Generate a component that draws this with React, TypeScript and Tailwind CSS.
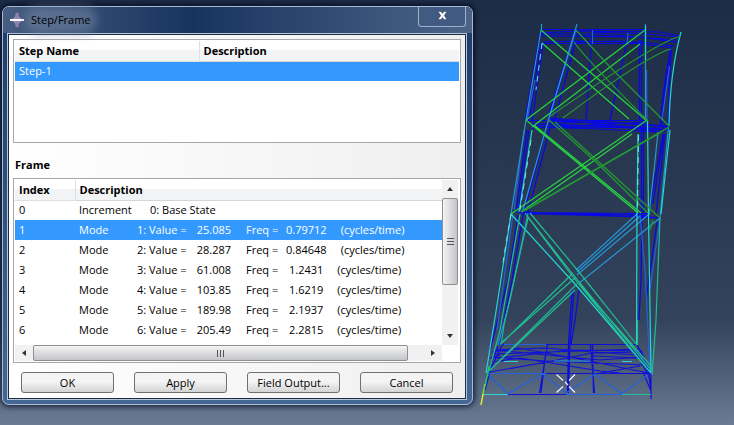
import { useState } from "react"

const frames = [
  { index: 1, value: "25.085", freq: "0.79712" },
  { index: 2, value: "28.287", freq: "0.84648" },
  { index: 3, value: "61.008", freq: "1.2431" },
  { index: 4, value: "103.85", freq: "1.6219" },
  { index: 5, value: "189.98", freq: "2.1937" },
  { index: 6, value: "205.49", freq: "2.2815" },
]

const actions = ["OK", "Apply", "Field Output...", "Cancel"]

// Wireframe members, grouped by contour colour
const members = [
  {
    color: "#0808e4",
    d: `M541 29.500H645 M541 33L577 31L660 32L681 36 M541 34L600 34L676 40 M542 36L640 37L677 42 M592 32L645 34L680 37
      M543 42L574 41L640 42L674 46 M542 43.500H640 M574 42L620 41L672 48 M577 36L640 37L674 42
      M540 33L525 120 M541 42L529 120 M543 44L532 122 M574 34L548 117 M572 42L550 118 M575 44L554 122
      M592 34L586 120 M628 36L610 120 M639.500 40L639.500 120 M641.500 40L641.500 120
      M671 46Q663 86 660 127 M672 50Q664 86 662 127 M671 50Q669 90 668 127
      M526 120.500H647 M549 118L669 126 M532 128L647 122 M553 124L668 130 M530 124L600 122L669 127 M533 127L600 129L656 132
      M549 119L610 125L660 129 M532 125L647 127 M555 126L600 125L665 132 M550 121L647 124 M560 127L668 128
      M527 130L516 212 M529 130L518 213 M546 130L524 212 M550 128L528 212 M641.500 130V212 M643.500 130V212
      M663 134L650 206 M664 134L653 204 M665 134L656 214
      M519 212.500L648 213.500 M523 213.500L660 217.500 M519 214L648 215 M523 212L660 218 M560 213L650 216
      M518 215L508 280L490 350 M523 215L512 280L499 345 M642 215L641 280L639 320 M657 222L646 300
      M572 290L568.500 344L567.500 393 M574 290L570 344L568.500 393 M579 290L575 320L571 345`,
  },
  {
    color: "#1010d8",
    d: `M500 344.500H637 M496 350L545 348L592 352L637 355 M494 354L550 352L640 349 M497 358L570 350L639 351
      M492 352L518 348L590 361L648 373 M494 357L545 361L645 365 M492 362L520 358L600 371L620 373 M490 372L547 362L592 353L640 352
      M495 350L600 360L641 357 M595 374L640 366 M592 356L641 358
      M543 373.500H651 M487 374L498 346 M486 378L496 350 M485 390L492 364 M489 373L502 345 M490 358L500 355
      M547.500 345L539.500 393 M545.500 354L541 393 M590.500 345L594.500 393 M592.500 345L593.500 393 M508 394.500H566
      M637 345L651 373 M638 352L650 376 M641 350L649 373 M651 373V399 M649 376L651 392 M643 372L651 391 M636 352L651 381`,
  },
  {
    color: "#2461dc",
    d: `M487 373.500H546 M566 394.500H622 M487 374L508 393.500L543 374L566 393L595 374L622 393.500L648 375
      M504 344.500H546 M646.500 70L647 120 M576 30L549 118 M628 33L627 44 M592.500 30V44
      M640 215L645 270L650 372 M513 214L497 330 M524 130L514 210 M535 80L527 120 M669.500 66L662 120 M660 218L650 290`,
  },
  {
    color: "#2597d8",
    d: `M541 30L526 120L511 214 M541.500 24V30 M577 24L549 118L523 210 M645.500 24V120
      M668.500 127L660 218 M658 132L654 170L649 215 M637 214L576 270 M648 215L577 275 M660 218L578 284
      M640 216L577 272 M528 213L510 300L498 345 M554 361H590`,
  },
  {
    color: "#25d6d2",
    d: `M681 32Q670 72 669 126 M511 214L497 305L486 373 M645.500 26V60 M647.500 120L648.500 215L651 372 M638 134L637 213L636.500 345
      M511 214L575 284L651 373 M483 394.500H508 M504 361.500H518 M622 361.500H632
      M532 130L519 212 M670 130L661 214`,
  },
  {
    color: "#20bd92",
    d: `M525 213L571 272L651 370 M530 213L579 272L637 345 M527 216L573 277L648 370 M576 277L500 344 M577 284L487 373
      M572 274L503 342 M575 290L489 371 M520 214L500 330L489 371 M528 218L504 325L501 345
      M660 218L656 320L652 375 M622 394.500H651 M637.500 320V345 M579 284L650 365`,
  },
  {
    color: "#28d340",
    d: `M541 30L647 121 M542 43L629 119 M645 30L526 120 M640 44L532 127
      M526 120L637 212 M534 125L641 213 M647 120L511 214 M632 134L521 212 M532 127L540 121`,
  },
  {
    color: "#229b32",
    d: `M575 29L610 67L669 126 M574 42Q585 58 648 121 M681 36Q658 41 549 117 M671 49Q646 56 563 118
      M549 120L596 162L648 213 M555 122L660 218 M669 127L523 211 M660 133L522 212 M663 131L526 210 M653 220L650 230`,
  },
]

function Tower() {
  return (
    <svg viewBox="473 0 261 425" fill="none" className="w-[261px] shrink-0 self-start" role="img" aria-label="Tower mode shape">
      {members.map((group) => (
        <path key={group.color} d={group.d} stroke={group.color} strokeWidth="1.200" />
      ))}
      <path d="M542 43L536 90 M531 140L520 210 M638.500 135L637.500 213 M511 214L503 262" stroke="#65e8f0" strokeDasharray="6 5" />
      <path d="M489 366L485 386" stroke="#28c653" strokeWidth="1.500" />
      <path d="M485 384L483 394" stroke="#6dd83f" strokeWidth="1.500" />
      <path d="M483 394L481 405" stroke="#d8e63a" strokeWidth="1.500" />
      <path d="M556.500 374.500L563 380.500M569 386.500L575 392.500M575 374.500L569 380.500M563 386.500L556.500 392.500M565 382L568 385" stroke="#f4f4f4" strokeWidth="1.200" />
    </svg>
  )
}

function TitleBar() {
  return (
    <header className="flex h-[26px] items-start justify-between pl-1 pr-1">
      <div className="flex h-[26px] items-center gap-1.5">
        <svg viewBox="0 0 16 18" className="h-[18px] w-4">
          <path d="M8 1Q9 6 14 9Q9 12 8 17Q7 12 2 9Q7 6 8 1Z" fill="#9b8bb8" />
          <path d="M8 2V16" stroke="#8f80b4" strokeWidth="3" />
          <path d="M1 9H15" stroke="white" strokeWidth="2" />
        </svg>
        <h1 className="rounded-full bg-[#7789a6]/50 text-[11px] text-black shadow-[0_0_8px_6px_rgba(119,137,166,0.5)]">
          Step/Frame
        </h1>
      </div>
      <button
        type="button"
        aria-label="Close"
        className="flex h-5 w-12 items-center justify-center rounded-b-[4px] border border-t-0 border-[#a3b1c8] bg-[#405a82] pb-0.5"
      >
        <svg viewBox="0 0 11 9" className="h-[9px] w-[11px]">
          <path d="M1 .5H4L5.5 2.5L7 .5H10L7.2 4.5L10 8.5H7L5.500 6.500L4 8.500H1L3.800 4.500Z" fill="white" stroke="#31435f" strokeWidth=".5" />
        </svg>
      </button>
    </header>
  )
}

const headCell =
  "h-5 border-b border-[#d5d5d5] bg-linear-to-b from-white from-45% to-[#f2f3f4] to-46% p-0 pl-1 text-left font-bold"

export default function App() {
  const [selected, setSelected] = useState(1)

  const rowClass = (index: number) =>
    index === selected ? "h-5 bg-[#3399ff] text-white" : "h-5"

  return (
    <main className="flex min-h-screen items-start bg-linear-to-b from-[#1d2c46] via-[#33435b] via-75% to-[#6b7b94] font-['Open_Sans',sans-serif] text-[11px] leading-4 text-black">
      <section className="mt-1.5 ml-0.5 min-w-0 flex-1 rounded-[7px] border border-[#a9bad3] bg-linear-to-b from-[#1d3c68] to-[#446895] pr-[5px] pb-1 pl-1 shadow-[0_0_5px_2px_rgba(0,8,30,0.7)]">
        <div className="-mr-[5px] -ml-1 rounded-t-[6px] bg-linear-to-r from-[#475e82] via-[#17345f] via-40% to-[#4c6488] px-0.5">
          <TitleBar />
        </div>
        <div className="border border-[#b9c6d8]">
          <div className="border border-[#1b2c47] bg-linear-to-r from-white to-[#efefef] px-1 pt-1 pb-[5px]">
            <div className="h-[104px] border border-[#a5a7ac] bg-white p-px">
              <table className="w-full border-collapse">
                <thead>
                  <tr>
                    <th className="h-5 w-[184px] border-r border-b border-[#dedfe1] bg-linear-to-b from-white from-45% to-[#f2f3f4] to-46% p-0 pl-1 text-left font-bold">Step Name</th>
                    <th className={headCell}>Description</th>
                  </tr>
                </thead>
                <tbody>
                  <tr className="h-5 bg-[#3399ff] text-white">
                    <td className="p-0 pl-1">Step-1</td>
                    <td className="p-0" />
                  </tr>
                </tbody>
              </table>
            </div>

            <h2 className="flex h-[35px] items-center pt-2 pl-0.5 font-bold">Frame</h2>

            <div className="border border-[#a5a7ac] bg-white p-px">
              <div className="flex">
                <div className="h-[165px] min-w-0 flex-1">
                  <table className="w-full border-collapse whitespace-nowrap">
                    <thead>
                      <tr>
                        <th className="h-5 w-[60px] border-r border-b border-[#dedfe1] bg-linear-to-b from-white from-45% to-[#f2f3f4] to-46% p-0 pl-1 text-left font-bold">Index</th>
                        <th className={headCell}>Description</th>
                      </tr>
                    </thead>
                    <tbody>
                      <tr className={rowClass(0)} onClick={() => setSelected(0)}>
                        <td className="p-0 pl-1">0</td>
                        <td className="p-0 pl-1">
                          <span className="inline-block w-[71px]">Increment</span>
                          <span>0: Base State</span>
                        </td>
                      </tr>
                      {frames.map((frame) => (
                        <tr key={frame.index} className={rowClass(frame.index)} onClick={() => setSelected(frame.index)}>
                          <td className="p-0 pl-1">{frame.index}</td>
                          <td className="p-0 pl-1">
                            <div className="flex">
                              <span className="w-[58px]">Mode</span>
                              <span className="w-[52px]">{frame.index}: Value =</span>
                              <span className="w-[42px] text-right">{frame.value}</span>
                              <span className="ml-[15px] w-10">Freq =</span>
                              <span className={frame.freq.length > 6 ? "mr-3.5" : "mr-3.5 ml-[3px]"}>{frame.freq}</span>
                              <span>(cycles/time)</span>
                            </div>
                          </td>
                        </tr>
                      ))}
                    </tbody>
                  </table>
                </div>
                <div className="mr-px flex w-4 flex-col bg-[#f1f1f1]">
                  <button type="button" aria-label="Scroll up" className="flex h-[18px] items-center justify-center">
                    <svg viewBox="0 0 6 4" className="h-1 w-1.5"><path d="M0 4L3 0L6 4Z" fill="#333" /></svg>
                  </button>
                  <div className="flex h-[87px] items-center justify-center rounded-[2px] border border-[#8e8f92] bg-linear-to-r from-[#f4f4f4] to-[#c4c5c9]">
                    <svg viewBox="0 0 7 8" className="h-2 w-[7px]"><path d="M0 .5H7M0 3.500H7M0 6.500H7" stroke="#555" /></svg>
                  </div>
                  <button type="button" aria-label="Scroll down" className="mt-auto flex h-[18px] items-center justify-center">
                    <svg viewBox="0 0 6 4" className="h-1 w-1.5"><path d="M0 0L3 4L6 0Z" fill="#333" /></svg>
                  </button>
                </div>
              </div>
              <div className="mr-[17px] flex h-4 bg-[#f1f1f1]">
                <button type="button" aria-label="Scroll left" className="flex w-[18px] items-center justify-center">
                  <svg viewBox="0 0 4 6" className="h-1.5 w-1"><path d="M4 0L0 3L4 6Z" fill="#333" /></svg>
                </button>
                <div className="mr-4 flex flex-1 items-center justify-center rounded-[2px] border border-[#8e8f92] bg-linear-to-b from-[#f4f4f4] to-[#c4c5c9]">
                  <svg viewBox="0 0 8 7" className="h-[7px] w-2"><path d="M.5 0V7M3.500 0V7M6.500 0V7" stroke="#555" /></svg>
                </div>
                <button type="button" aria-label="Scroll right" className="flex w-[18px] items-center justify-center">
                  <svg viewBox="0 0 4 6" className="h-1.5 w-1"><path d="M0 0L4 3L0 6Z" fill="#333" /></svg>
                </button>
              </div>
            </div>

            <div className="mt-[9px] flex gap-5 px-2">
              {actions.map((action) => (
                <button
                  key={action}
                  type="button"
                  className="h-[21px] flex-1 rounded-[3px] border border-[#707070] bg-linear-to-b from-[#f4f4f4] from-45% to-[#d4d4d4] whitespace-nowrap"
                >
                  {action}
                </button>
              ))}
            </div>
          </div>
        </div>
      </section>
      <Tower />
    </main>
  )
}
